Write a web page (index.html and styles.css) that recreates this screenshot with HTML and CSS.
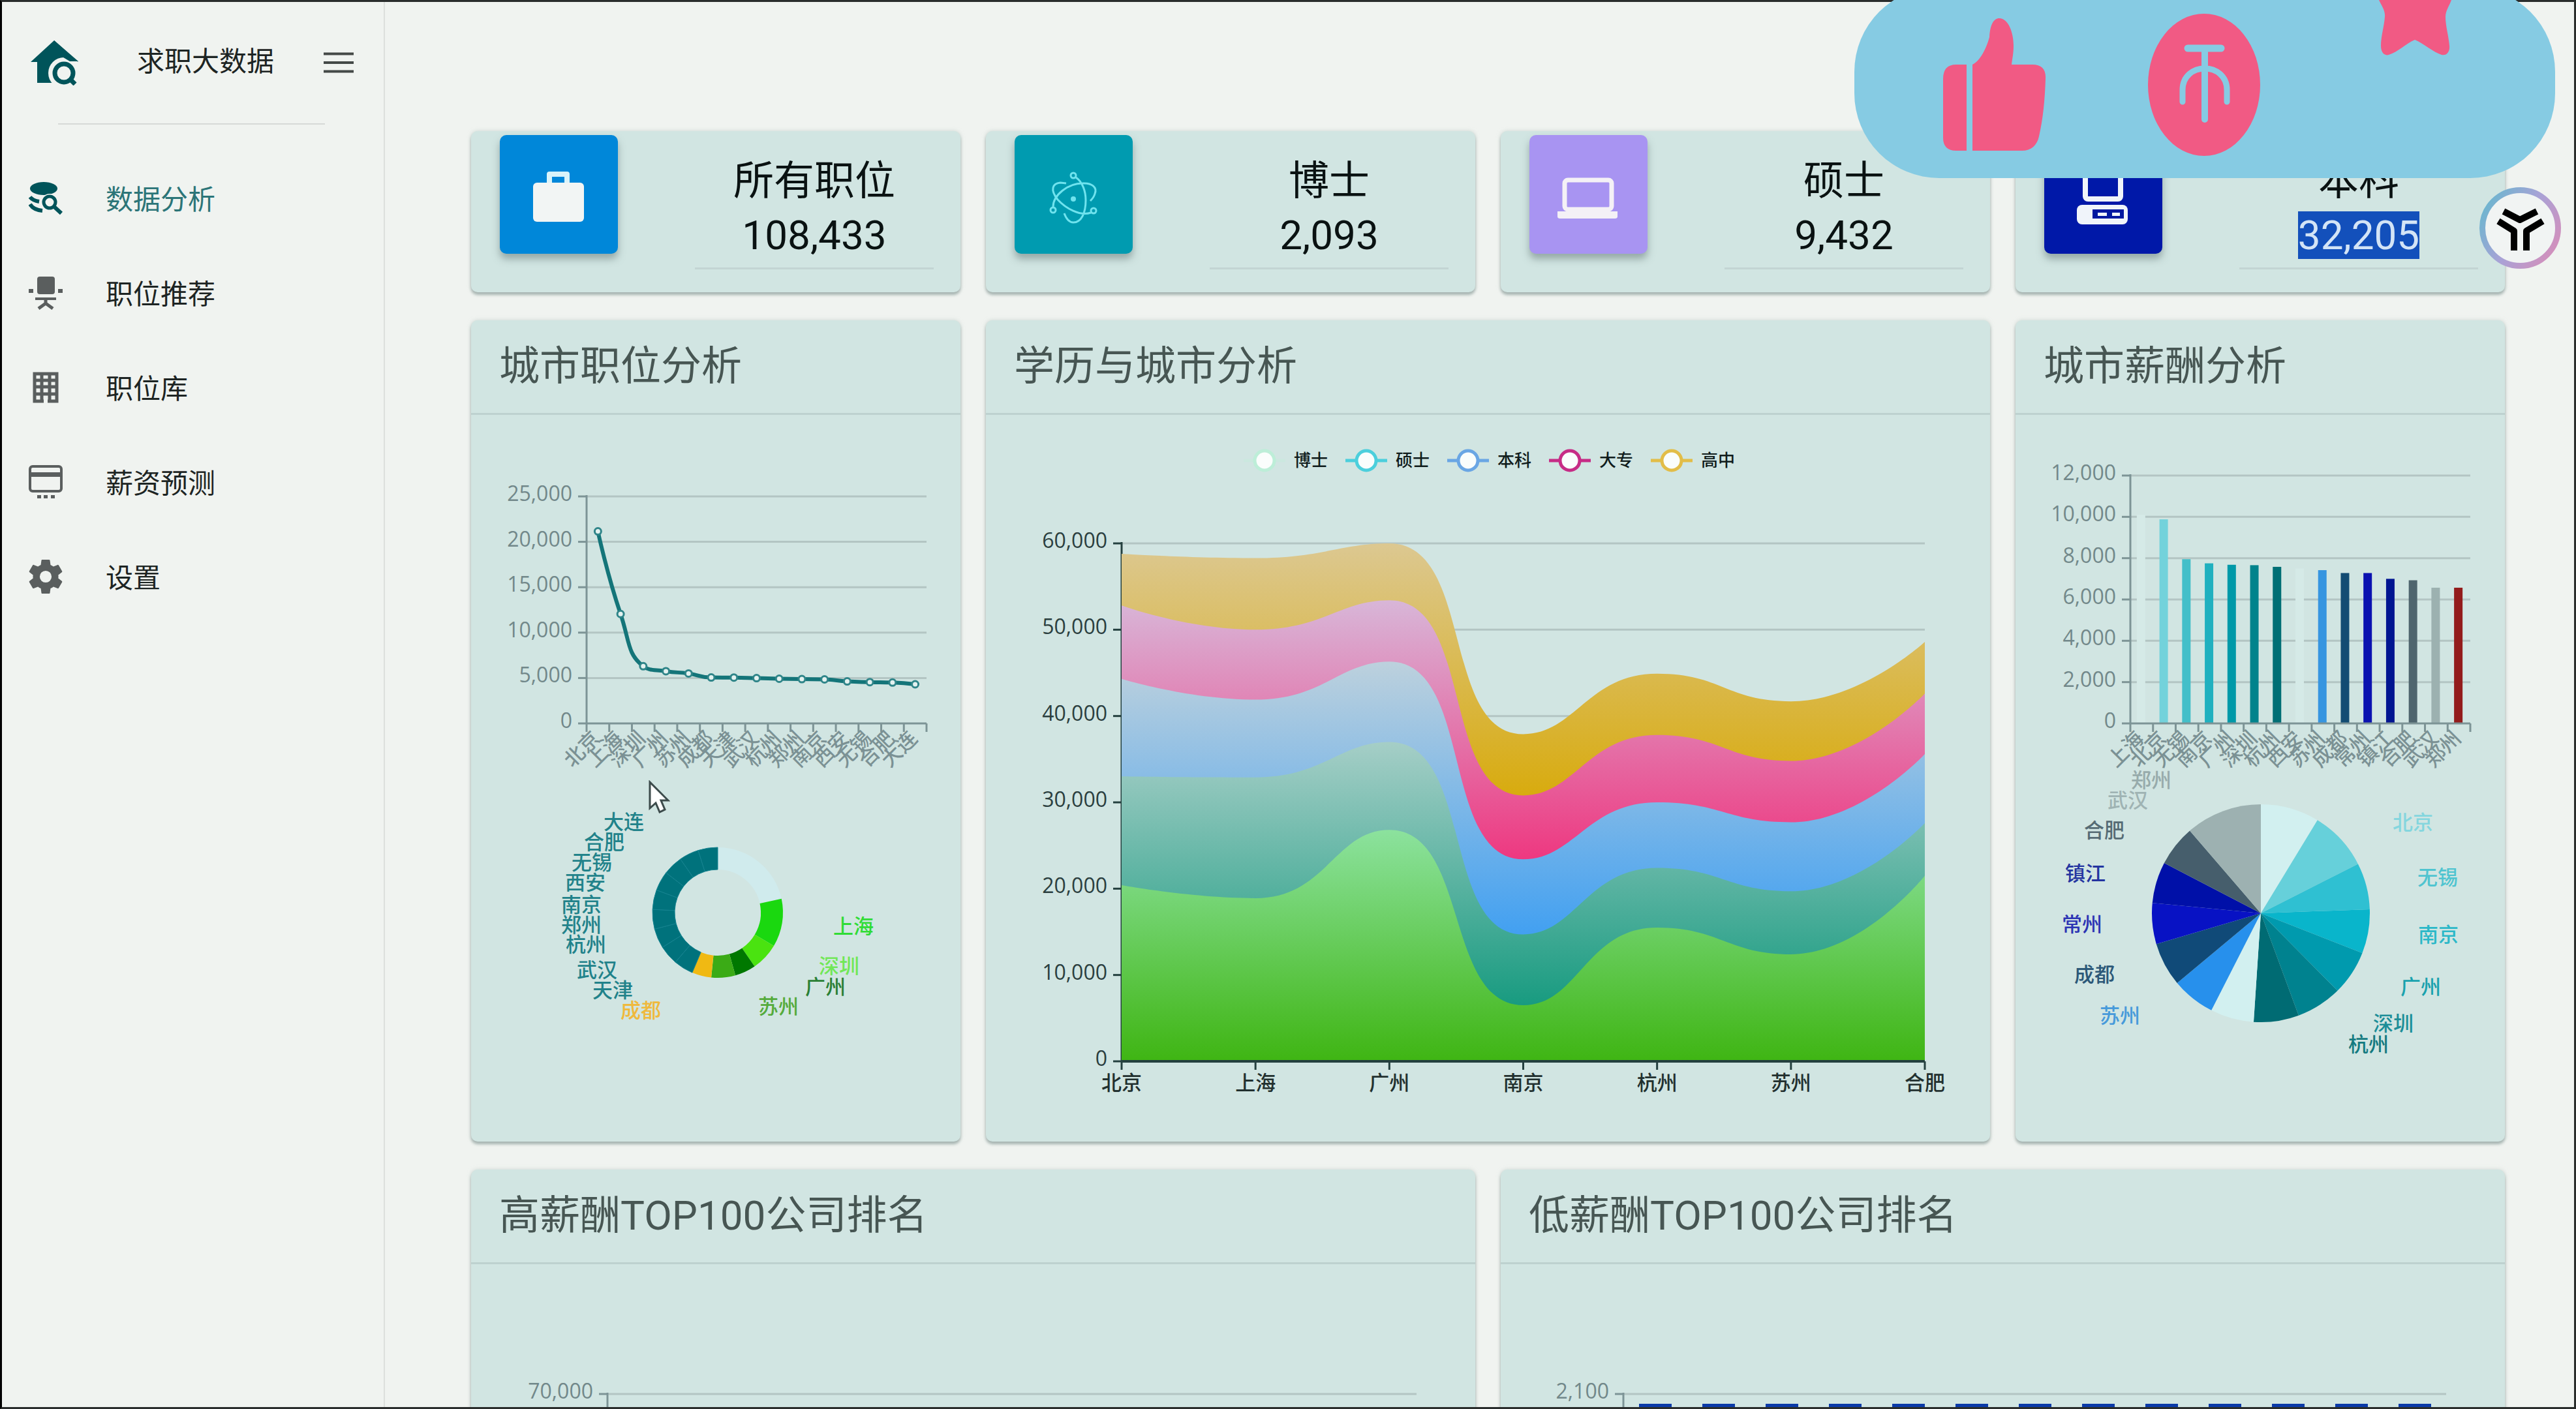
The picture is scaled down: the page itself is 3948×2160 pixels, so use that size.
FILE: index.html
```html
<!DOCTYPE html>
<html lang="zh-CN">
<head>
<meta charset="utf-8">
<title>求职大数据</title>
<link rel="stylesheet" href="styles.css">
</head>
<body>
<div class="app">
  <aside class="sidebar">
    <div class="brand">
      <svg class="brand-logo" viewBox="0 0 73 69" aria-hidden="true">
        <path d="M36 0 73 33H60V65H10V33H0Z" fill="#00545a"/>
        <circle cx="51" cy="50" r="24" fill="#f0f3f0"/>
        <path d="M54 28h9l10 5v3H54z" fill="#f0f3f0"/>
        <path d="M36 0 73 32 60 32 50 26 36 26Z" fill="#00545a"/>
        <circle cx="51" cy="50" r="14" fill="none" stroke="#00545a" stroke-width="7"/>
        <path d="M60 59 68 67" stroke="#00545a" stroke-width="7"/>
      </svg>
      <span class="brand-name">求职大数据</span>
      <button class="menu-button" type="button" aria-label="菜单">
        <svg viewBox="0 0 46 32" aria-hidden="true"><path d="M0 2.500H46M0 16H46M0 29.500H46" stroke="#444947" stroke-width="4"/></svg>
      </button>
    </div>
    <nav class="nav">
      <a class="nav-item active" href="#analysis">
        <svg viewBox="0 0 52 52" aria-hidden="true">
          <ellipse cx="23" cy="11" rx="21" ry="10" fill="currentColor"/>
          <path d="M2 24c3 4 8 6 14 7M2 35c3 5 9 9 19 10" fill="none" stroke="currentColor" stroke-width="6"/>
          <circle cx="32" cy="32" r="13" fill="#f0f3f0"/>
          <circle cx="32" cy="32" r="9" fill="none" stroke="currentColor" stroke-width="5"/>
          <path d="m38 38 12 11" stroke="currentColor" stroke-width="6"/>
        </svg>
        <span>数据分析</span></a>
      <a class="nav-item" href="#recommend">
        <svg viewBox="0 0 52 52" aria-hidden="true">
          <rect x="13" y="1" width="27" height="27" rx="4" fill="currentColor"/>
          <path d="M0 20h7v6H0zM45 20h7v6h-7zM10 33h32v4H10z" fill="currentColor"/>
          <path d="M26 37v5M15 50l11-8 11 8" fill="none" stroke="currentColor" stroke-width="5"/>
        </svg>
        <span>职位推荐</span></a>
      <a class="nav-item" href="#library">
        <svg viewBox="0 0 52 52" aria-hidden="true">
          <path d="M9 5h34v42H9zM9 15h34M9 25h34M9 36h34M20 5v42M32 5v31M32 36v11" fill="none" stroke="currentColor" stroke-width="5"/>
          <path d="M23 39h6v11h-6z" fill="#f0f3f0"/>
        </svg>
        <span>职位库</span></a>
      <a class="nav-item" href="#salary">
        <svg viewBox="0 0 52 52" aria-hidden="true">
          <rect x="2" y="2" width="48" height="38" rx="4" fill="none" stroke="currentColor" stroke-width="4"/>
          <path d="M2 11h48v7H2zM13 46h6v5h-6zM23 46h6v5h-6zM34 46h6v5h-6z" fill="currentColor"/>
        </svg>
        <span>薪资预测</span></a>
      <a class="nav-item" href="#settings">
        <svg class="gear" viewBox="2 2 20 20" aria-hidden="true">
          <path fill="currentColor" d="M12 15.500A3.500 3.500 0 0 1 8.500 12 3.500 3.500 0 0 1 12 8.500a3.500 3.500 0 0 1 3.500 3.500 3.500 3.500 0 0 1-3.500 3.500m7.430-2.530c.04-.32.07-.64.07-.97s-.03-.66-.07-1l2.110-1.630c.19-.15.24-.42.12-.64l-2-3.460c-.12-.22-.39-.31-.61-.22l-2.490 1c-.52-.39-1.060-.73-1.690-.98l-.37-2.650A.506.506 0 0 0 14 2h-4c-.25 0-.46.18-.5.42l-.37 2.650c-.63.25-1.170.59-1.690.98l-2.490-1c-.22-.09-.49 0-.61.22l-2 3.460c-.13.22-.07.49.12.64L4.570 11c-.04.34-.07.67-.07 1s.03.65.07.97l-2.110 1.660c-.19.15-.25.42-.12.64l2 3.460c.12.22.39.3.61.22l2.490-1.010c.52.4 1.060.74 1.690.99l.37 2.650c.04.24.25.42.5.42h4c.25 0 .46-.18.5-.42l.37-2.650c.63-.26 1.170-.59 1.690-.99l2.490 1.010c.22.08.49 0 .61-.22l2-3.460c.12-.22.07-.49-.12-.64z"/>
        </svg>
        <span>设置</span></a>
    </nav>
  </aside>

  <main class="dashboard">
    <section class="card stat">
      <div class="tile tile-blue">
        <svg viewBox="0 0 181 182" aria-hidden="true"><path d="M76 76V60h27v16" fill="none" stroke="#d9f3fa" stroke-width="8" stroke-linejoin="round"/><rect x="51" y="73" width="78" height="60" rx="6" fill="#f2f5f4"/></svg>
      </div>
      <div class="stat-text"><h3>所有职位</h3><p>108,433</p></div>
    </section>
    <section class="card stat">
      <div class="tile tile-teal">
        <svg viewBox="0 0 181 182" aria-hidden="true" fill="none" stroke="#6fe3ee" stroke-width="3">
          <path d="M94 65C104 72 109 86 109 100 109 120 102 134 90 134 84 134 79 128 76 120M59 110C59 92 82 74 104 74 118 73 127 80 123 90 122 94 119 98 116 101M117 119C100 125 78 112 66 99 54 84 58 74 70 73L79 74"/>
          <circle cx="90" cy="62" r="4"/><circle cx="59" cy="115" r="4"/><circle cx="121" cy="116" r="4"/>
          <circle cx="90" cy="98" r="4" fill="#6fe3ee" stroke="none"/>
        </svg>
      </div>
      <div class="stat-text"><h3>博士</h3><p>2,093</p></div>
    </section>
    <section class="card stat">
      <div class="tile tile-violet">
        <svg viewBox="0 0 181 182" aria-hidden="true"><rect x="54" y="69" width="72" height="45" rx="5" fill="none" stroke="#f4f1f6" stroke-width="7"/><path d="M43 117h92v8q0 3-4 3H47q-4 0-4-3z" fill="#f4f1f6"/></svg>
      </div>
      <div class="stat-text"><h3>硕士</h3><p>9,432</p></div>
    </section>
    <section class="card stat">
      <div class="tile tile-navy">
        <svg viewBox="0 0 181 182" aria-hidden="true"><rect x="63" y="55" width="54" height="43" rx="4" fill="none" stroke="#f0f4fa" stroke-width="8"/><rect x="50" y="107" width="78" height="30" rx="8" fill="#f0f4fa"/><path d="M74 114h48v14H74z" fill="#0018a0"/><path d="M82 119h14v5H82zM104 119h12v5h-12z" fill="#f0f4fa"/></svg>
      </div>
      <div class="stat-text"><h3>本科</h3><p><span class="selected">32,205</span></p></div>
    </section>

    <section class="card">
      <h2>城市职位分析</h2>
      <svg class="chart" id="city-jobs" viewBox="722 636 750 1114" role="img" aria-label="城市职位分析"></svg>
    </section>
    <section class="card span-two">
      <h2>学历与城市分析</h2>
      <svg class="chart" id="degree-city" viewBox="1511 636 1539 1114" role="img" aria-label="学历与城市分析"></svg>
    </section>
    <section class="card">
      <h2>城市薪酬分析</h2>
      <svg class="chart" id="city-salary" viewBox="3089 636 750 1114" role="img" aria-label="城市薪酬分析"></svg>
    </section>

    <section class="card span-two">
      <h2>高薪酬TOP100公司排名</h2>
      <svg class="chart" id="top-high" viewBox="722 1938 1539 300" role="img" aria-label="高薪酬TOP100公司排名"></svg>
    </section>
    <section class="card span-two">
      <h2>低薪酬TOP100公司排名</h2>
      <svg class="chart" id="top-low" viewBox="2300 1938 1539 300" role="img" aria-label="低薪酬TOP100公司排名"></svg>
    </section>
  </main>
</div>

<div class="reactions">
  <svg viewBox="2842 -20 1074 293" aria-hidden="true">
    <g fill="#f15a84">
      <path d="M3014 99v132h-16q-20 0-20-20V121q0-22 20-22z"/>
      <path d="M3023 231V99c12-6 21-24 26-42 1-20 7-29 15-29 14 0 22 22 22 42 0 12-2 20-3 29h32c14 0 21 7 20 22-1 33-4 62-10 88-3 14-12 22-26 22z"/>
      <ellipse cx="3378" cy="130" rx="86" ry="109"/>
      <path d="M3646 0C3650 9 3656 16 3655 26 3654 40 3649 56 3649 70 3649 80 3654 86 3661 84 3675 80 3688 66 3701 61 3714 66 3729 80 3742 84 3750 86 3755 79 3754 70 3753 56 3748 40 3748 26 3748 16 3754 9 3757 0V-20H3646Z"/>
    </g>
    <g fill="none" stroke="#86cbe3" stroke-linecap="round">
      <path d="M3353 74h51" stroke-width="11"/>
      <path d="M3379 78v105" stroke-width="10"/>
      <path d="M3345 156v-18c0-44 68-44 68 0v18" stroke-width="9"/>
    </g>
  </svg>
</div>
<button class="assistant" type="button" aria-label="助手">
  <svg viewBox="0 0 125 125" aria-hidden="true">
    <defs><linearGradient id="ring" x1="0" y1="0.200" x2="1" y2="0.800"><stop offset="0" stop-color="#6cb6cf"/><stop offset="0.500" stop-color="#a9a2d6"/><stop offset="1" stop-color="#d48fbb"/></linearGradient></defs>
    <circle cx="62.500" cy="62.500" r="58" fill="#f1f4f3" stroke="url(#ring)" stroke-width="9"/>
    <g fill="none" stroke="#000" stroke-width="10" stroke-linejoin="round">
      <path d="M37 37 62 50 88 37"/>
      <path d="M29 52 53 67V97M97 52 72 67V97"/>
    </g>
  </svg>
</button>
<svg class="cursor" viewBox="0 0 34 52" aria-hidden="true"><path d="M3 3v40l9-8 6 14 8-4-6-14h11z" fill="#fff" stroke="#3c4b4b" stroke-width="3"/></svg>

<script src="charts.js"></script>
</body>
</html>
```
FILE: styles.css
```css
* {
  box-sizing: border-box;
}

body {
  margin: 0;
  position: relative;
  height: 100vh;
  overflow: hidden;
  background: #f0f3f0;
  color: #1d2423;
  font-family: Roboto, "Noto Sans CJK SC", sans-serif;
}

.app {
  display: flex;
  height: 100%;
  border: 3px solid #2a2d2c;
  border-left-color: #000;
  overflow: hidden;
}

.sidebar {
  flex: 0 0 587px;
  border-right: 2px solid #dcdfdd;
  font-size: 42px;
}

.brand {
  display: flex;
  align-items: center;
  height: 186px;
  margin-right: 46px;
  padding-left: 44px;
}

.brand-logo {
  width: 73px;
  height: 69px;
}

.brand-name {
  margin-left: 90px;
  line-height: 60px;
  padding-bottom: 3px;
}

.menu-button {
  margin-left: auto;
  padding: 0;
  border: 0;
  background: none;
}

.menu-button svg {
  display: block;
  width: 46px;
  height: 32px;
}

.nav::before {
  content: "";
  display: block;
  height: 2px;
  margin: 0 90px 40px 86px;
  background: #d6d9d7;
}

.nav-item {
  display: flex;
  align-items: center;
  gap: 66px;
  height: 145px;
  padding-left: 41px;
  color: #1d2423;
  text-decoration: none;
}

.nav-item span {
  padding-bottom: 3px;
}

.nav-item svg {
  width: 52px;
  height: 52px;
  color: #5a5e5e;
}

.nav-item.active {
  color: #2c7578;
}

.nav-item.active svg {
  color: #00545a;
}

.dashboard {
  flex: 1;
  display: grid;
  grid-template-columns: repeat(4, 1fr);
  grid-auto-rows: max-content;
  gap: 43px 39px;
  padding: 198px 106px 0 132px;
}

.card {
  min-width: 0;
  background: #d1e5e2;
  border-radius: 10px;
  box-shadow: 0 4px 4px #a6b4b1, 0 0 6px rgba(180, 195, 190, 0.6);
}

.span-two {
  grid-column: span 2;
}

.card h2 {
  margin: 0;
  height: 145px;
  padding-left: 43px;
  border-bottom: 3px solid #bdd1cf;
  color: #475653;
  font-size: 62px;
  font-weight: 400;
  line-height: 142px;
}

.chart {
  display: block;
  width: 100%;
  height: auto;
}

.chart text {
  font-family: "Open Sans", "Noto Sans CJK SC", sans-serif;
  font-size: 32px;
}

.chart .city {
  font-size: 31px;
}

.chart .share {
  font-weight: 500;
}

.chart .legend {
  font-size: 26px;
  font-weight: 500;
}

.stat {
  display: flex;
  justify-content: space-between;
  height: 247px;
  padding: 6px 41px 0 44px;
}

.tile {
  width: 181px;
  height: 182px;
  border-radius: 10px;
  box-shadow: 0 8px 12px rgba(90, 110, 110, 0.5);
}

.tile svg {
  display: block;
  width: 100%;
  height: 100%;
}

.tile-blue {
  background: #0087d9;
}

.tile-teal {
  background: #009bb0;
}

.tile-violet {
  background: #a894f2;
}

.tile-navy {
  background: #0018a8;
}

.stat-text {
  align-self: flex-start;
  width: 366px;
  margin-top: 29px;
  padding-bottom: 8px;
  border-bottom: 3px solid #c3d5d3;
  color: #0a1212;
  font-size: 62px;
  line-height: 83px;
  text-align: center;
}

.stat-text h3,
.stat-text p {
  margin: 0;
  font-size: 62px;
  font-weight: 400;
}

.selected {
  background: #1350bb;
  color: #d3e4f6;
}

.reactions {
  position: absolute;
  top: -20px;
  right: 32px;
  width: 1074px;
  height: 293px;
  border-radius: 130px;
  background: #86cbe3;
  overflow: hidden;
}

.reactions svg {
  display: block;
  width: 100%;
  height: 100%;
}

.assistant {
  position: absolute;
  top: 287px;
  right: 23px;
  width: 125px;
  height: 125px;
  padding: 0;
  border: 0;
  background: none;
}

.assistant svg {
  display: block;
}

.cursor {
  position: absolute;
  top: 1196px;
  left: 993px;
  width: 34px;
  height: 52px;
}
```
FILE: charts.js
```js
const NS = 'http://www.w3.org/2000/svg';

function add(parent, tag, attrs, text) {
  const el = document.createElementNS(NS, tag);
  for (const key in attrs) el.setAttribute(key, attrs[key]);
  if (text !== undefined) el.textContent = text;
  parent.appendChild(el);
  return el;
}

function line(parent, x1, y1, x2, y2, color, width) {
  add(parent, 'line', { x1, y1, x2, y2, stroke: color, 'stroke-width': width });
}

// Horizontal grid, value axis and its labels.
function valueAxis(svg, o) {
  const count = o.labels.length - 1;
  o.labels.forEach((label, i) => {
    if (!label) return;
    const y = o.bottom - (o.bottom - o.top) * i / count;
    if (i > 0) line(svg, o.left, y, o.right, y, '#b3c5c3', 3);
    line(svg, o.left - 13, y, o.left, y, o.color, 3);
    add(svg, 'text', { x: o.left - 22, y: y + 7, 'text-anchor': 'end', fill: o.text }, label);
  });
}

function axisLines(svg, o, ticks) {
  line(svg, o.left, o.top - 2, o.left, o.bottom, o.color, 3);
  line(svg, o.left, o.bottom, o.right, o.bottom, o.color, 3);
  for (let i = 0; i <= ticks; i++) {
    const x = o.left + (o.right - o.left) * i / ticks;
    line(svg, x, o.bottom, x, o.bottom + 13, o.color, 3);
  }
}

function slantedLabels(svg, o, cities) {
  const step = (o.right - o.left) / cities.length;
  cities.forEach((city, i) => {
    const x = o.left + step * (i + 0.5) - 2;
    const y = o.bottom + 18;
    add(svg, 'text', {
      class: 'city share', x, y: y + 10, 'text-anchor': 'end', fill: '#7b9194',
      transform: `rotate(-45 ${x} ${y})`
    }, city);
  });
}

// Smooth curve through the points; control points stay inside each segment.
function smooth(points, strength) {
  const clamp = (v, a, b) => Math.max(Math.min(a, b), Math.min(Math.max(a, b), v));
  const before = [], after = [];
  points.forEach((p, i) => {
    const a = points[i - 1], b = points[i + 1];
    if (!a || !b) { before.push(p); after.push(p); return; }
    const vx = b[0] - a[0], vy = b[1] - a[1];
    const da = Math.hypot(p[0] - a[0], p[1] - a[1]);
    const db = Math.hypot(p[0] - b[0], p[1] - b[1]);
    const ratio = db / (da + db);
    let nx = clamp(p[0] + vx * strength * ratio, b[0], p[0]);
    let ny = clamp(p[1] + vy * strength * ratio, b[1], p[1]);
    let cx = clamp(p[0] - (nx - p[0]) * da / db, a[0], p[0]);
    let cy = clamp(p[1] - (ny - p[1]) * da / db, a[1], p[1]);
    nx = p[0] + (p[0] - cx) * db / da;
    ny = p[1] + (p[1] - cy) * db / da;
    before.push([cx, cy]);
    after.push([nx, ny]);
  });
  let d = `M${points[0]}`;
  for (let i = 1; i < points.length; i++) d += `C${after[i - 1]} ${before[i]} ${points[i]}`;
  return d;
}

function slices(svg, cx, cy, outer, inner, list) {
  let start = 0;
  list.forEach(([end, fill, edge]) => {
    const at = (r, deg) => {
      const t = deg * Math.PI / 180;
      return `${cx + r * Math.sin(t)} ${cy - r * Math.cos(t)}`;
    };
    const large = end - start > 180 ? 1 : 0;
    const d = `M${at(outer, start)}A${outer} ${outer} 0 ${large} 1 ${at(outer, end)}L${at(inner, end)}` +
      (inner ? `A${inner} ${inner} 0 ${large} 0 ${at(inner, start)}` : '') + 'Z';
    add(svg, 'path', { d, fill, stroke: edge || 'none', 'stroke-width': 1 });
    start = end;
  });
}

function pieLabels(svg, list) {
  list.forEach(([city, x, y, fill]) => add(svg, 'text', { class: 'city share', x, y: y + 11, fill }, city));
}

const GREY = { color: '#7d9496', text: '#72888a' };

// City / vacancies
{
  const svg = document.getElementById('city-jobs');
  const o = { left: 899, right: 1420, top: 761, bottom: 1109, labels: ['0', '5,000', '10,000', '15,000', '20,000', '25,000'], ...GREY };
  valueAxis(svg, o);
  axisLines(svg, o, 15);
  slantedLabels(svg, o, ['北京', '上海', '深圳', '广州', '苏州', '成都', '天津', '武汉', '杭州', '郑州', '南京', '西安', '无锡', '合肥', '大连']);
  const jobs = [21150, 12050, 6300, 5750, 5500, 5060, 5050, 4990, 4920, 4880, 4850, 4630, 4550, 4500, 4310];
  const pts = jobs.map((v, i) => [o.left + 34.730 * (i + 0.5), o.bottom - v * 348 / 25000]);
  add(svg, 'path', { d: smooth(pts, 0.5), fill: 'none', stroke: '#147579', 'stroke-width': 6 });
  pts.forEach(([cx, cy]) => add(svg, 'circle', { cx, cy, r: 5, fill: '#e4f2f0', stroke: '#2f8589', 'stroke-width': 3 }));

  const teal = [];
  for (let i = 1; i <= 9; i++) teal.push([203 + 157 * i / 9, '#00727c', '#158390']);
  slices(svg, 1100, 1399, 100, 66, [[77.8, '#d0ebed'], [120.7, '#1ad80f'], [145.6, '#4ae310'], [164.3, '#007800'], [185.7, '#3bab16'], [203, '#f0b913'], ...teal]);
  pieLabels(svg, [
    ['大连', 925, 1260, '#21828a'], ['合肥', 895, 1291, '#21828a'], ['无锡', 876, 1322, '#21828a'],
    ['西安', 866, 1353, '#21828a'], ['南京', 860, 1387, '#21828a'], ['郑州', 860, 1418, '#21828a'],
    ['杭州', 867, 1448, '#21828a'], ['武汉', 884, 1487, '#21828a'], ['天津', 908, 1518, '#21828a'],
    ['成都', 951, 1549, '#efb93c'], ['苏州', 1162, 1543, '#55ab3c'], ['广州', 1234, 1513, '#2a8035'],
    ['深圳', 1255, 1481, '#71e757'], ['上海', 1277, 1420, '#2fdc35']
  ]);
}

// Degree by city, stacked
{
  const svg = document.getElementById('degree-city');
  const o = { left: 1719, right: 2950, top: 833, bottom: 1627, color: '#24403f', text: '#2b3f3f',
    labels: ['0', '10,000', '20,000', '30,000', '40,000', '50,000', '60,000'] };
  valueAxis(svg, o);
  axisLines(svg, o, 6);
  const defs = add(svg, 'defs', {});
  const series = [
    ['#dcc891', '#d8ab0e', 833, 1220, [58.8, 58.3, 60.0, 37.9, 44.9, 41.7, 48.6]],
    ['#d8b6d8', '#ee3880', 921, 1317, [52.8, 50.0, 53.4, 30.8, 37.8, 34.8, 42.6]],
    ['#bdd1dd', '#42a0f1', 1014, 1432, [44.3, 41.9, 46.3, 23.4, 30.0, 27.7, 35.6]],
    ['#a8cfc8', '#189b80', 1130, 1541, [33.0, 32.9, 37.0, 14.7, 22.4, 19.7, 27.6]],
    ['#8ce29e', '#3fb513', 1272, 1627, [20.4, 18.9, 26.8, 6.5, 15.5, 12.4, 21.5]]
  ];
  series.forEach(([from, to, y1, y2, values], n) => {
    const g = add(defs, 'linearGradient', { id: 'area' + n, gradientUnits: 'userSpaceOnUse', x1: 0, x2: 0, y1, y2 });
    add(g, 'stop', { offset: 0, 'stop-color': from });
    add(g, 'stop', { offset: 1, 'stop-color': to });
    const pts = values.map((v, i) => [o.left + 205.167 * i, o.bottom - v * 13.233]);
    add(svg, 'path', { d: smooth(pts, 0.5) + `V${o.bottom}H${o.left}Z`, fill: `url(#area${n})` });
  });
  line(svg, o.left, o.bottom, o.right, o.bottom, o.color, 4);
  ['北京', '上海', '广州', '南京', '杭州', '苏州', '合肥'].forEach((city, i) =>
    add(svg, 'text', { class: 'city share', x: o.left + 205.167 * i, y: 1671, 'text-anchor': 'middle', fill: '#22302f' }, city));
  [['博士', '#bdeed8'], ['硕士', '#4ccfdc'], ['本科', '#6aa6e4'], ['大专', '#c62c86'], ['高中', '#e2bd48']].forEach(([name, color], i) => {
    const x = 1938 + 156 * i;
    line(svg, x - 32, 706, x + 32, 706, i ? color : '#cbe8df', 5);
    add(svg, 'circle', { cx: x, cy: 706, r: 15, fill: '#fafdfc', stroke: color, 'stroke-width': 5 });
    add(svg, 'text', { class: 'legend', x: x + 45, y: 715, fill: '#101c1c' }, name);
  });
}

// City / salary
{
  const svg = document.getElementById('city-salary');
  const o = { left: 3265, right: 3786, top: 729, bottom: 1109, labels: ['0', '2,000', '4,000', '6,000', '8,000', '10,000', '12,000'], ...GREY };
  valueAxis(svg, o);
  const bars = [
    [10100, '#d5eae7'], [9880, '#73d2db'], [7950, '#43bfc9'], [7750, '#20b0bf'], [7680, '#0099a8'],
    [7660, '#00838c'], [7580, '#006f75'], [7500, '#d5eae7'], [7420, '#3695e0'], [7280, '#134c73'],
    [7280, '#0b12b0'], [7000, '#001591'], [6930, '#4f656e'], [6570, '#9cb1b0'], [6570, '#931b1b']
  ];
  bars.forEach(([v, fill], i) => {
    const height = v * 380 / 12000;
    add(svg, 'rect', { x: o.left + 34.733 * (i + 0.5) - 7.500, y: o.bottom - height, width: 13, height, fill });
  });
  axisLines(svg, o, 15);
  slantedLabels(svg, o, ['上海', '北京', '无锡', '南京', '广州', '深圳', '杭州', '西安', '苏州', '成都', '常州', '镇江', '合肥', '武汉', '郑州']);
  slices(svg, 3465, 1400, 167, 0, [
    [31.3, '#d2f0f0'], [63.1, '#66d0da'], [87.9, '#2fc0d2'], [111.4, '#09b5cb'], [135.3, '#009aae'],
    [159.7, '#00828f'], [183.8, '#006b73'], [207, '#d2f0f0'], [230.2, '#2790ec'], [253.6, '#104a78'],
    [275.4, '#0812c4'], [297.5, '#0010a8'], [319.3, '#465e6c'], [360, '#9db1b1']
  ]);
  pieLabels(svg, [
    ['郑州', 3266, 1196, '#97abab'], ['武汉', 3230, 1227, '#9fb3b3'], ['合肥', 3194, 1273, '#566b74'],
    ['镇江', 3165, 1339, '#2434a0'], ['常州', 3160, 1417, '#2c34b4'], ['成都', 3179, 1494, '#2c5878'],
    ['苏州', 3218, 1557, '#479ada'], ['北京', 3667, 1261, '#84d6de'], ['无锡', 3705, 1345, '#4fc4d0'],
    ['南京', 3706, 1433, '#2cb8c8'], ['广州', 3679, 1513, '#1aa2ae'], ['深圳', 3637, 1569, '#1c8e98'],
    ['杭州', 3599, 1601, '#147a80']
  ]);
}

// Company rankings
{
  const high = document.getElementById('top-high');
  const a = { left: 931, right: 2171, top: 2137, bottom: 2215, labels: ['', '70,000'], ...GREY };
  valueAxis(high, a);
  axisLines(high, a, 13);

  const low = document.getElementById('top-low');
  const b = { left: 2488, right: 3749, top: 2137, bottom: 2215, labels: ['', '2,100'], ...GREY };
  valueAxis(low, b);
  for (let i = 0; i < 13; i++) {
    add(low, 'rect', { x: 2512 + 97 * i, y: 2152, width: 50, height: 63, fill: '#0a3aa8' });
  }
  axisLines(low, b, 13);
}
```
